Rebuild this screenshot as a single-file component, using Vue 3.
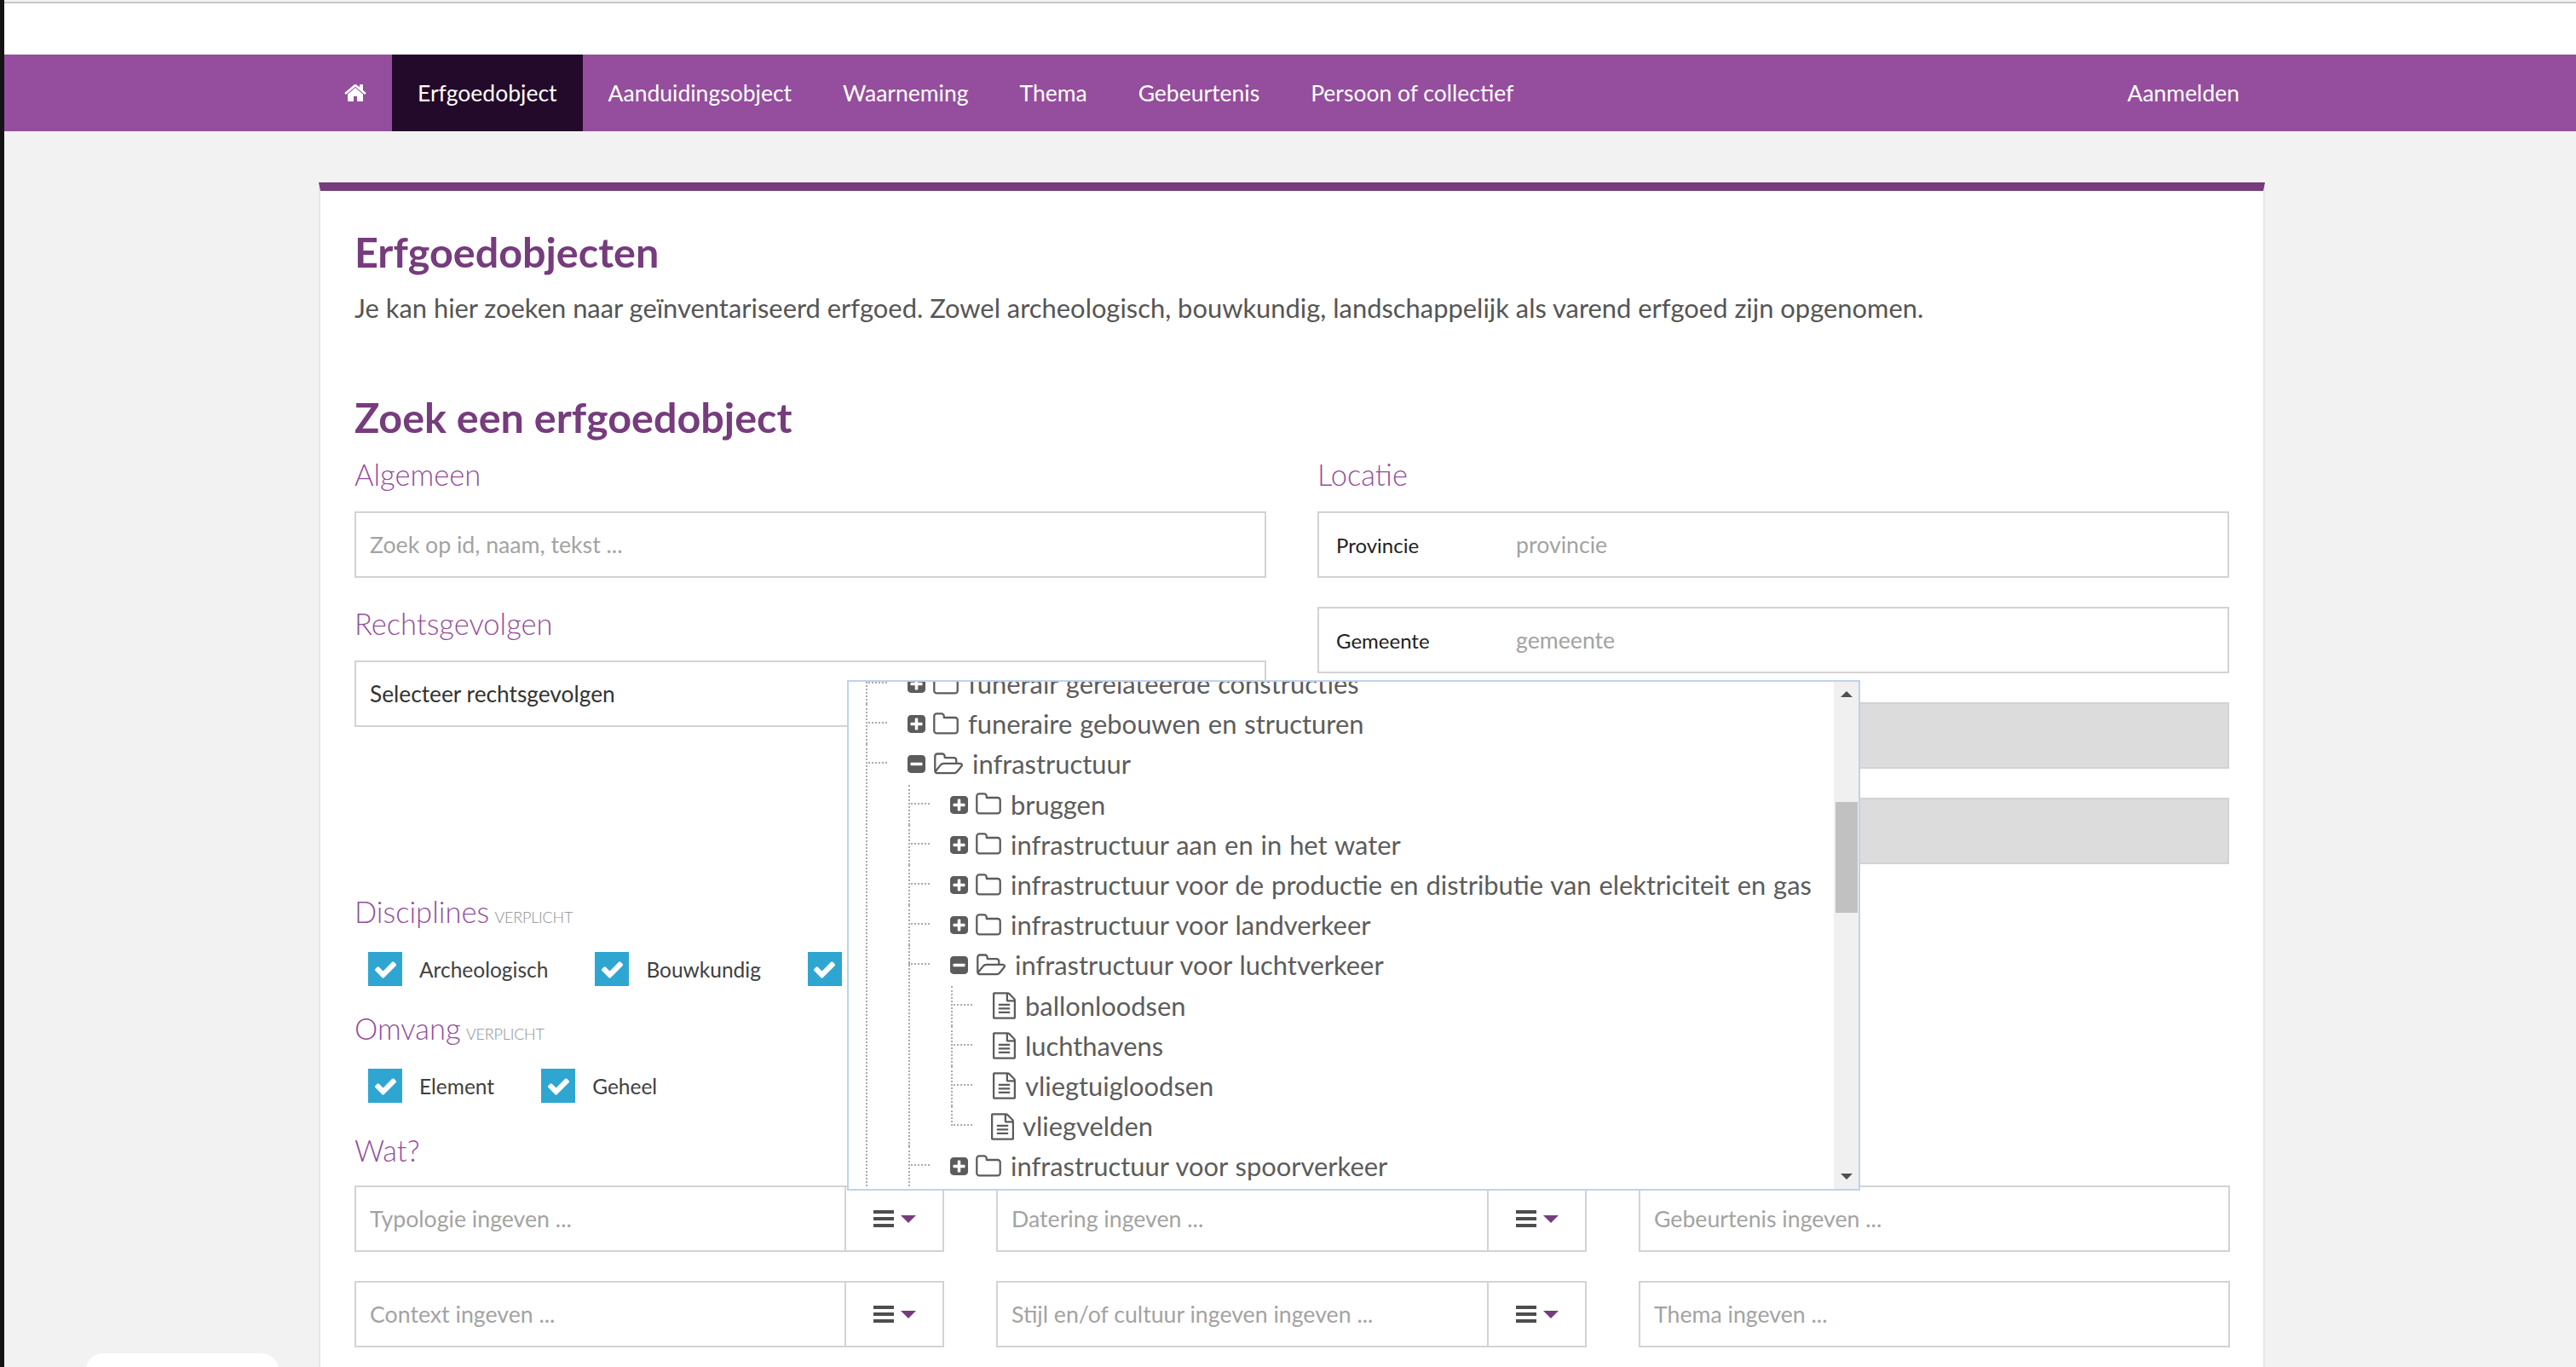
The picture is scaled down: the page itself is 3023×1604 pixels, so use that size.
<template>
  <div class="page">
    <div class="top-line"></div>
    <div class="top-bar"></div>

    <nav class="nav">
      <div class="nav-inner">
        <a class="nav-home">
          <svg viewBox="0 0 1792 1792" width="28" height="28"><path :d="icons.home" fill="#fff" /></svg>
        </a>
        <a v-for="item in navItems" :key="item" class="nav-item" :class="{ active: item === 'Erfgoedobject' }">{{ item }}</a>
        <a class="nav-item nav-login">Aanmelden</a>
      </div>
    </nav>

    <main class="card">
      <h1>Erfgoedobjecten</h1>
      <p class="intro">Je kan hier zoeken naar geïnventariseerd erfgoed. Zowel archeologisch, bouwkundig, landschappelijk als varend erfgoed zijn opgenomen.</p>
      <h2>Zoek een erfgoedobject</h2>

      <div class="columns">
        <section class="col">
          <h3>Algemeen</h3>
          <input class="field" placeholder="Zoek op id, naam, tekst ..." />
          <h3 class="after-field">Rechtsgevolgen</h3>
          <div class="field select">Selecteer rechtsgevolgen</div>

          <h3 class="disciplines">Disciplines <small>VERPLICHT</small></h3>
          <div class="checks">
            <label v-for="c in disciplines" :key="c" class="check">
              <span class="box"><svg viewBox="0 0 1792 1792" width="29" height="29"><path :d="icons.check" fill="#fff" /></svg></span>
              {{ c }}
            </label>
          </div>

          <h3 class="omvang">Omvang <small>VERPLICHT</small></h3>
          <div class="checks">
            <label v-for="c in omvang" :key="c" class="check">
              <span class="box"><svg viewBox="0 0 1792 1792" width="29" height="29"><path :d="icons.check" fill="#fff" /></svg></span>
              {{ c }}
            </label>
          </div>

          <h3 class="wat">Wat?</h3>
        </section>

        <section class="col">
          <h3>Locatie</h3>
          <div class="loc-rows">
            <div v-for="row in locatie" :key="row.label + row.value + row.id" class="field loc" :class="{ disabled: row.disabled }">
              <span class="loc-label">{{ row.label }}</span>
              <span class="loc-value">{{ row.value }}</span>
            </div>
          </div>
        </section>
      </div>

      <div class="wat-grid">
        <div v-for="f in watFields" :key="f.text" class="group">
          <input class="group-input" :placeholder="f.text" />
          <div v-if="f.menu" class="group-btn">
            <span class="bars"><i></i><i></i><i></i></span>
            <span class="caret"></span>
          </div>
        </div>
      </div>

      <!-- uitgeklapte typologie boom -->
      <div class="popup">
        <div class="tree-view">
          <ul class="tree">
            <li v-for="n in tree" :key="n.text">
              <div class="node">
                <svg class="toggle" viewBox="128 128 1536 1536" width="21" height="21"><path :d="n.children ? icons.minus : icons.plus" fill="#5c5c5c" /></svg>
                <svg v-if="n.children" class="folder-open" viewBox="0 0 1972 1792" width="35" height="32"><path :d="icons.folderOpen" fill="#5c5c5c" /></svg>
                <svg v-else class="folder" viewBox="64 0 1664 1792" width="30" height="32"><path :d="icons.folder" fill="#5c5c5c" /></svg>
                <span>{{ n.text }}</span>
              </div>
              <ul v-if="n.children" class="tree">
                <li v-for="m in n.children" :key="m.text">
                  <div class="node">
                    <svg class="toggle" viewBox="128 128 1536 1536" width="21" height="21"><path :d="m.children ? icons.minus : icons.plus" fill="#5c5c5c" /></svg>
                    <svg v-if="m.children" class="folder-open" viewBox="0 0 1972 1792" width="35" height="32"><path :d="icons.folderOpen" fill="#5c5c5c" /></svg>
                    <svg v-else class="folder" viewBox="64 0 1664 1792" width="30" height="32"><path :d="icons.folder" fill="#5c5c5c" /></svg>
                    <span>{{ m.text }}</span>
                  </div>
                  <ul v-if="m.children" class="tree leafs">
                    <li v-for="leaf in m.children" :key="leaf">
                      <div class="node">
                        <svg class="file" viewBox="128 0 1536 1792" width="27" height="32"><path :d="icons.file" fill="#5c5c5c" /></svg>
                        <span>{{ leaf }}</span>
                      </div>
                    </li>
                  </ul>
                </li>
              </ul>
            </li>
          </ul>
        </div>
        <div class="scrollbar">
          <span class="arrow up"></span>
          <span class="thumb"></span>
          <span class="arrow down"></span>
        </div>
      </div>
    </main>

    <div class="bubble"></div>
  </div>
</template>

<script setup>
const navItems = ['Erfgoedobject', 'Aanduidingsobject', 'Waarneming', 'Thema', 'Gebeurtenis', 'Persoon of collectief']
const disciplines = ['Archeologisch', 'Bouwkundig', 'Landschappelijk']
const omvang = ['Element', 'Geheel']

const locatie = [
  { id: 1, label: 'Provincie', value: 'provincie' },
  { id: 2, label: 'Gemeente', value: 'gemeente' },
  { id: 3, label: '', value: '', disabled: true },
  { id: 4, label: '', value: '', disabled: true }
]

const watFields = [
  { text: 'Typologie ingeven ...', menu: true },
  { text: 'Datering ingeven ...', menu: true },
  { text: 'Gebeurtenis ingeven ...' },
  { text: 'Context ingeven ...', menu: true },
  { text: 'Stijl en/of cultuur ingeven ingeven ...', menu: true },
  { text: 'Thema ingeven ...' }
]

const tree = [
  { text: 'funerair gerelateerde constructies' },
  { text: 'funeraire gebouwen en structuren' },
  {
    text: 'infrastructuur',
    children: [
      { text: 'bruggen' },
      { text: 'infrastructuur aan en in het water' },
      { text: 'infrastructuur voor de productie en distributie van elektriciteit en gas' },
      { text: 'infrastructuur voor landverkeer' },
      {
        text: 'infrastructuur voor luchtverkeer',
        children: ['ballonloodsen', 'luchthavens', 'vliegtuigloodsen', 'vliegvelden']
      },
      { text: 'infrastructuur voor spoorverkeer' }
    ]
  }
]

const icons = {
  home: 'M1472 992v480q0 26-19 45t-45 19h-384v-384h-256v384h-384q-26 0-45-19t-19-45v-480q0-1 .5-3t.5-3l575-474 575 474q1 2 1 6zm223-69l-62 74q-8 9-21 11h-3q-13 0-21-7l-692-577-692 577q-12 8-24 7-13-2-21-11l-62-74q-8-10-7-23.5t11-21.5l719-599q32-26 76-26t76 26l244 204v-195q0-14 9-23t23-9h192q14 0 23 9t9 23v408l219 182q10 8 11 21.5t-7 23.5z',
  check: 'M1671 566q0 40-28 68l-724 724-136 136q-28 28-68 28t-68-28l-136-136-362-362q-28-28-28-68t28-68l136-136q28-28 68-28t68 28l294 295 656-657q28-28 68-28t68 28l136 136q28 28 28 68z',
  plus: 'M1408 960v-128q0-26-19-45t-45-19h-320v-320q0-26-19-45t-45-19h-128q-26 0-45 19t-19 45v320h-320q-26 0-45 19t-19 45v128q0 26 19 45t45 19h320v320q0 26 19 45t45 19h128q26 0 45-19t19-45v-320h320q26 0 45-19t19-45zm256-544v960q0 119-84.5 203.5t-203.5 84.5h-960q-119 0-203.5-84.5t-84.5-203.5v-960q0-119 84.5-203.5t203.5-84.5h960q119 0 203.5 84.5t84.5 203.5z',
  minus: 'M1408 960v-128q0-26-19-45t-45-19h-896q-26 0-45 19t-19 45v128q0 26 19 45t45 19h896q26 0 45-19t19-45zm256-544v960q0 119-84.5 203.5t-203.5 84.5h-960q-119 0-203.5-84.5t-84.5-203.5v-960q0-119 84.5-203.5t203.5-84.5h960q119 0 203.5 84.5t84.5 203.5z',
  folder: 'M1600 1312v-704q0-40-28-68t-68-28h-704q-40 0-68-28t-28-68v-64q0-40-28-68t-68-28h-320q-40 0-68 28t-28 68v960q0 40 28 68t68 28h1216q40 0 68-28t28-68zm128-704v704q0 92-66 158t-158 66h-1216q-92 0-158-66t-66-158v-960q0-92 66-158t158-66h320q92 0 158 66t66 158v32h672q92 0 158 66t66 158z',
  folderOpen: 'M1845 931q0-35-53-35h-1088q-40 0-85.5 21.5t-71.5 52.5l-294 363q-18 24-18 40 0 35 53 35h1088q40 0 86-22t71-53l294-363q18-22 18-39zm-1141-163h768v-160q0-40-28-68t-68-28h-576q-40 0-68-28t-28-68v-64q0-40-28-68t-68-28h-320q-40 0-68 28t-28 68v853l256-315q44-53 116-87.5t140-34.5zm1269 163q0 62-46 120l-295 363q-43 53-116 87.5t-140 34.5h-1088q-92 0-158-66t-66-158v-960q0-92 66-158t158-66h320q92 0 158 66t66 158v32h544q92 0 158 66t66 158v160h192q54 0 99 24.5t67 70.5q15 32 15 68z',
  file: 'M1596 380q28 28 48 76t20 88v1152q0 40-28 68t-68 28h-1344q-40 0-68-28t-28-68v-1600q0-40 28-68t68-28h896q40 0 88 20t76 48zm-444-244v376h376q-10-29-22-41l-313-313q-12-12-41-22zm384 1528v-1024h-416q-40 0-68-28t-28-68v-416h-768v1536h1280zm-1024-864q0-14 9-23t23-9h704q14 0 23 9t9 23v64q0 14-9 23t-23 9h-704q-14 0-23-9t-9-23v-64zm736 224q14 0 23 9t9 23v64q0 14-9 23t-23 9h-704q-14 0-23-9t-9-23v-64q0-14 9-23t23-9h704zm0 256q14 0 23 9t9 23v64q0 14-9 23t-23 9h-704q-14 0-23-9t-9-23v-64q0-14 9-23t23-9h704z'
}
</script>

<style>
html, body {
  margin: 0;
  background: #f2f2f2;
  overflow: hidden;
}
</style>

<style scoped>
.page {
  position: relative;
  height: 1604px;
  overflow: hidden;
  box-sizing: border-box;
  border-left: 5px solid #141414;
  background: #f2f2f2;
  font-family: "Lato", "Open Sans", sans-serif;
  color: #4d4d4d;
}

.top-line {
  height: 2px;
  margin-top: 2px;
  background: #c8c8c8;
}

.top-bar {
  height: 60px;
  background: #fff;
}

/* navigatie */
.nav {
  height: 90px;
  background: #944e9d;
}

.nav-inner {
  display: flex;
  height: 100%;
  width: 2283px;
  margin-left: 370px;
}

.nav-home {
  display: flex;
  align-items: center;
  width: 85px;
  padding-left: 28px;
  box-sizing: border-box;
}

.nav-item {
  display: flex;
  align-items: center;
  padding: 0 30px;
  color: #fff;
  font-size: 26.5px;
}

.nav-item.active {
  background: #230a2b;
}

.nav-login {
  margin-left: auto;
}

/* kaart */
.card {
  position: relative;
  margin: 60px 0 0 369px;
  width: 2284px;
  height: 1400px;
  box-sizing: border-box;
  padding: 0 40px;
  background: #fff;
  border-top: 10px solid #763c7d;
  border-left: 2px solid #e6e6e6;
  border-right: 2px solid #e6e6e6;
}

h1 {
  margin: 44px 0 0;
  font-size: 48.5px;
  line-height: 54px;
  font-weight: 700;
  color: #763c7d;
}

.intro {
  margin: 20px 0 0;
  font-size: 30.9px;
  line-height: 40px;
  color: #555;
}

h2 {
  margin: 80px 0 0;
  font-size: 48.5px;
  line-height: 54px;
  font-weight: 700;
  color: #763c7d;
}

.columns {
  display: grid;
  grid-template-columns: 1070px 1070px;
  column-gap: 60px;
}

.col {
  min-width: 0;
}

h3 {
  margin: 19px 0 0;
  height: 44px;
  font-size: 34.5px;
  line-height: 44px;
  font-weight: 300;
  color: #944e9d;
}

h3 small {
  margin-left: -3px;
  font-size: 18px;
  letter-spacing: -0.2px;
  color: #8f8f8f;
}

.field {
  display: block;
  width: 100%;
  height: 78px;
  box-sizing: border-box;
  padding: 0 16px;
  border: 2px solid #d3d3d3;
  background: #fff;
  font: 26.7px "Lato", sans-serif;
  outline: none;
}

.field::placeholder,
.group-input::placeholder {
  color: #a3a3a3;
  opacity: 1;
}

h3 + .field {
  margin-top: 21px;
}

h3.after-field {
  margin-top: 32px;
}

.select {
  display: flex;
  align-items: center;
  font-size: 26.3px;
  color: #333;
}

.disciplines {
  margin-top: 195px;
}

.omvang {
  margin-top: 28px;
}

.wat {
  margin-top: 34px;
}

.checks {
  display: flex;
  gap: 55px;
  margin: 25px 0 0 16px;
  height: 40px;
  white-space: nowrap;
}

.check {
  display: flex;
  align-items: center;
  gap: 20px;
  font-size: 24.5px;
  color: #404040;
}

.box {
  display: flex;
  align-items: center;
  justify-content: center;
  flex: none;
  width: 40px;
  height: 40px;
  background: #2fa6d1;
}

.loc-rows {
  display: flex;
  flex-direction: column;
  gap: 34px;
  margin-top: 21px;
}

.loc {
  display: flex;
  align-items: center;
  padding-left: 20px;
}

.loc.disabled {
  background: #dcdcdc;
}

.loc-label {
  width: 211px;
  font-size: 24px;
  color: #222;
}

.loc-value {
  color: #a3a3a3;
}

/* onderste rij met typologie, datering ... */
.wat-grid {
  display: grid;
  grid-template-columns: 692px 693px 694px;
  column-gap: 61px;
  row-gap: 34px;
  margin-top: 19px;
}

.group {
  display: flex;
  height: 78px;
  box-sizing: border-box;
  border: 2px solid #d3d3d3;
}

.group-input {
  flex: 1;
  min-width: 0;
  border: 0;
  outline: none;
  padding: 0 16px;
  font: 26.7px "Lato", sans-serif;
}

.group-btn {
  display: flex;
  align-items: center;
  justify-content: center;
  gap: 8px;
  width: 113px;
  border-left: 2px solid #d3d3d3;
}

.bars {
  display: flex;
  flex-direction: column;
  gap: 4px;
  width: 24px;
}

.bars i {
  display: block;
  height: 4px;
  background: #4d4d4d;
}

.caret {
  width: 0;
  height: 0;
  border-left: 9px solid transparent;
  border-right: 9px solid transparent;
  border-top: 9px solid #763c7d;
}

/* boom ligt over het formulier */
.popup {
  position: absolute;
  left: 618px;
  top: 574px;
  width: 1189px;
  height: 599px;
  display: flex;
  box-sizing: border-box;
  border: 2px solid #bcd4ec;
  background: #fff;
}

.tree-view {
  flex: 1;
  min-width: 0;
  overflow: hidden;
  font-size: 30.9px;
  word-spacing: 1px;
  color: #5c5c5c;
}

.tree-view > .tree {
  margin: -21px 0 0 20px;
}

.tree {
  list-style: none;
  margin: 0 0 0 50px;
  padding: 0;
}

.tree li {
  position: relative;
}

.tree li::after {
  content: "";
  position: absolute;
  left: 0;
  top: 0;
  bottom: 0;
  border-left: 2px dotted #aaa;
}

.leafs li:last-child::after {
  bottom: 24px;
}

.node {
  position: relative;
  display: flex;
  align-items: center;
  height: 47.2px;
  padding-left: 49px;
  white-space: nowrap;
}

.node::before {
  content: "";
  position: absolute;
  left: 0;
  top: 21px;
  width: 25px;
  border-top: 2px dotted #aaa;
}

.toggle {
  flex: none;
  margin-right: 9px;
}

.folder,
.folder-open,
.file {
  flex: none;
  margin-right: 11px;
}

.leafs li:last-child .node {
  padding-left: 47px;
}

.leafs li:last-child .file {
  margin-right: 10px;
}

.scrollbar {
  position: relative;
  flex: none;
  width: 29px;
  background: #f0f0f0;
}

.thumb {
  position: absolute;
  left: 2px;
  right: 1px;
  top: 141px;
  height: 130px;
  background: #c1c1c1;
}

.arrow {
  position: absolute;
  left: 8px;
  width: 0;
  height: 0;
  border-left: 7px solid transparent;
  border-right: 7px solid transparent;
}

.arrow.up {
  top: 11px;
  border-bottom: 7px solid #505050;
}

.arrow.down {
  bottom: 11px;
  border-top: 7px solid #505050;
}

.bubble {
  position: absolute;
  left: 96px;
  top: 1588px;
  width: 226px;
  height: 40px;
  border-radius: 20px 20px 0 0;
  background: #fff;
}
</style>
